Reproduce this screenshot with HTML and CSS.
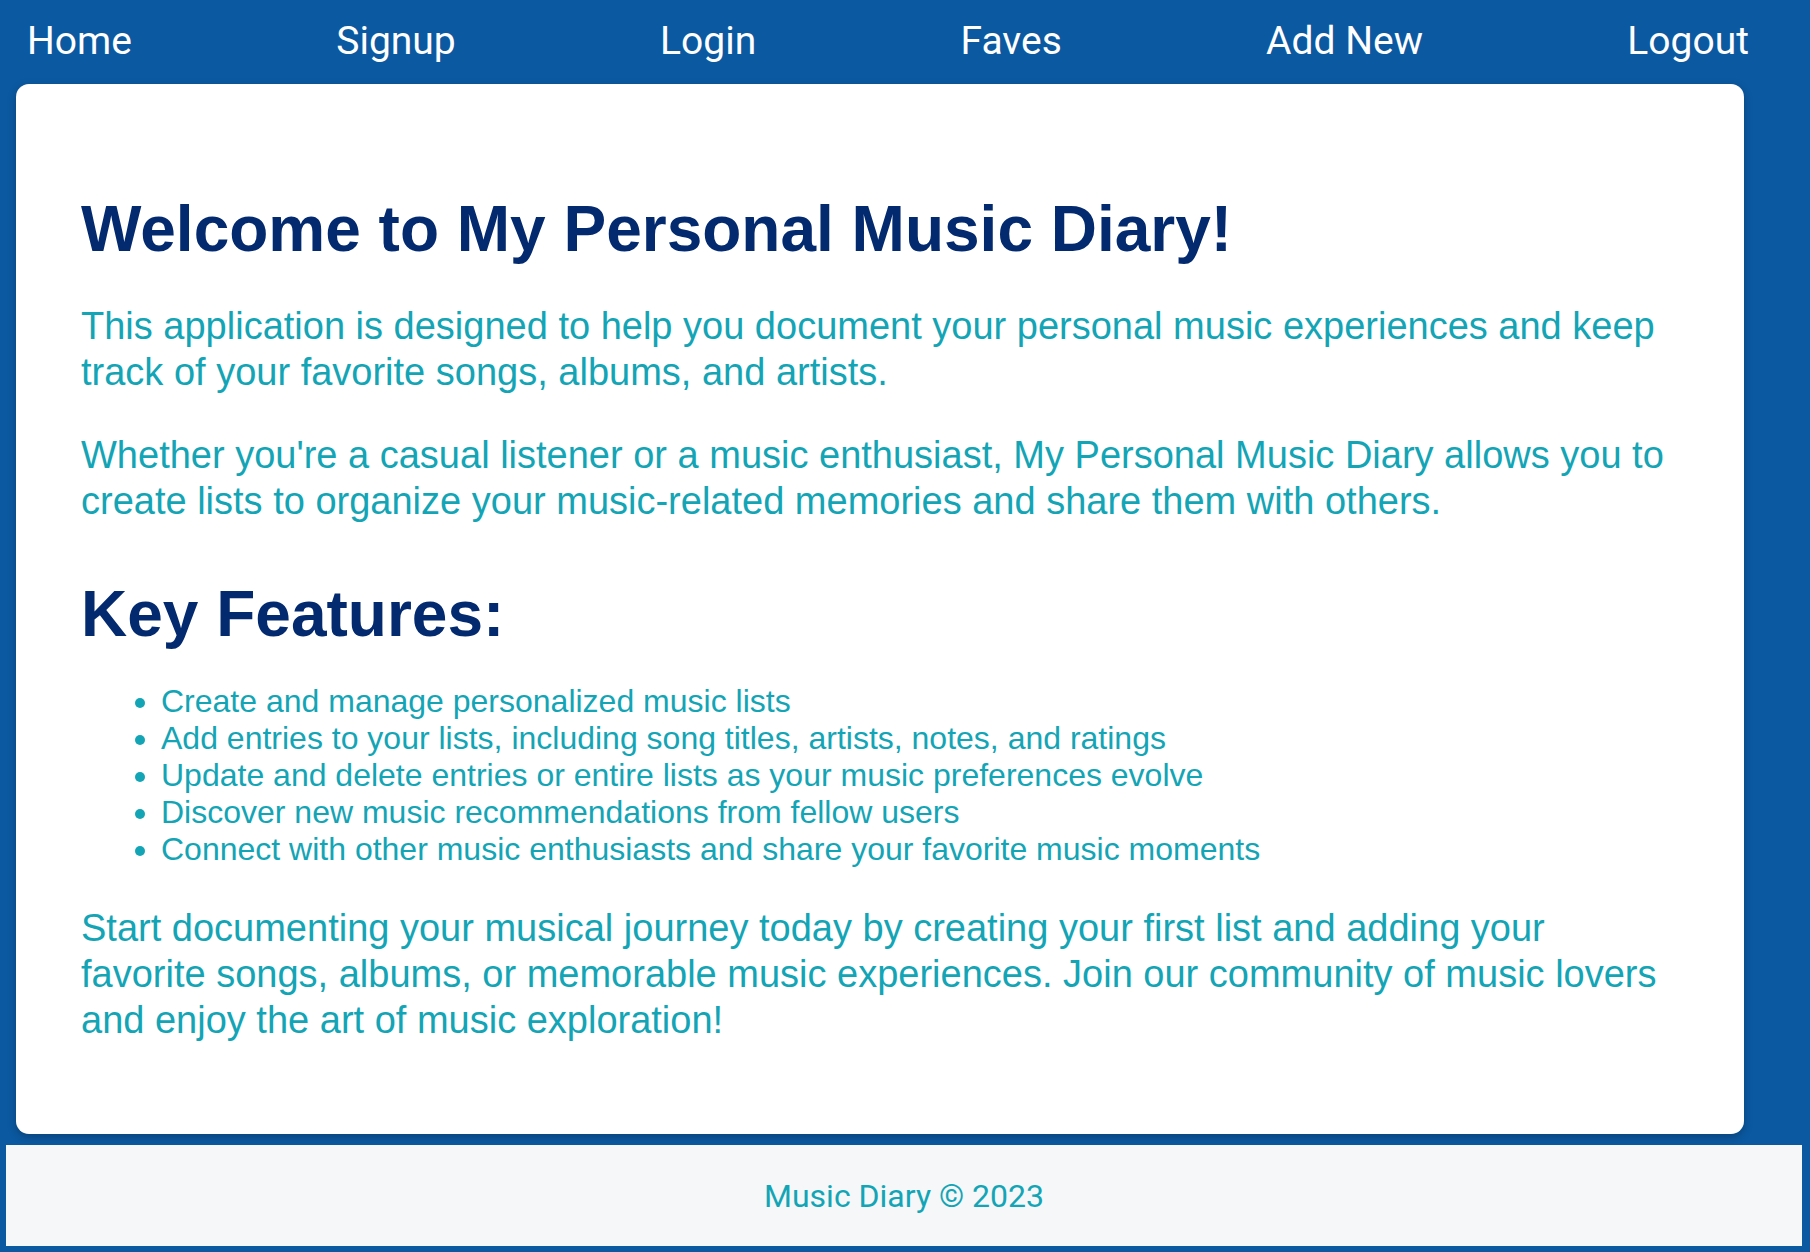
FILE: index.html
```html
<!DOCTYPE html>
<html lang="en">
<head>
<meta charset="utf-8">
<title>My Personal Music Diary</title>
<link rel="stylesheet" href="styles.css">
</head>
<body>
<nav class="nav">
  <a class="nav-link" href="#">Home</a>
  <a class="nav-link" href="#">Signup</a>
  <a class="nav-link" href="#">Login</a>
  <a class="nav-link" href="#">Faves</a>
  <a class="nav-link" href="#">Add New</a>
  <a class="nav-link" href="#">Logout</a>
</nav>
<main class="card">
  <h1 class="title">Welcome to My Personal Music Diary!</h1>
  <p class="text">This application is designed to help you document your personal music experiences and keep track of your favorite songs, albums, and artists.</p>
  <p class="text">Whether you're a casual listener or a music enthusiast, My Personal Music Diary allows you to create lists to organize your music-related memories and share them with others.</p>
  <h2 class="subtitle">Key Features:</h2>
  <ul class="features">
    <li>Create and manage personalized music lists</li>
    <li>Add entries to your lists, including song titles, artists, notes, and ratings</li>
    <li>Update and delete entries or entire lists as your music preferences evolve</li>
    <li>Discover new music recommendations from fellow users</li>
    <li>Connect with other music enthusiasts and share your favorite music moments</li>
  </ul>
  <p class="text">Start documenting your musical journey today by creating your first list and adding your favorite songs, albums, or memorable music experiences. Join our community of music lovers and enjoy the art of music exploration!</p>
</main>
<footer class="footer">Music Diary © 2023</footer>
</body>
</html>
```
FILE: styles.css
```css
html, body {
  margin: 0;
  padding: 0;
}
body {
  background: #0b59a1;
  font-family: "Liberation Sans", Arial, sans-serif;
}
.nav {
  box-sizing: border-box;
  height: 80px;
  display: flex;
  align-items: center;
  justify-content: space-between;
  padding: 2px 61px 0 27px;
}
.nav-link {
  font-family: Roboto, "Liberation Sans", sans-serif;
  font-size: 39px;
  color: #ffffff;
  text-decoration: none;
}
.card {
  display: block;
  box-sizing: border-box;
  width: 1728px;
  margin: 4px 0 0 16px;
  padding: 65px 65px 53px;
  background: #ffffff;
  border-radius: 13px;
  box-shadow: 0 3px 8px rgba(0, 0, 0, 0.25);
}
.title {
  font-size: 64px;
  font-weight: 700;
  line-height: normal;
  color: #032a6e;
  margin: 43px 0 38px;
}
.subtitle {
  font-size: 64px;
  font-weight: 700;
  line-height: normal;
  color: #032a6e;
  margin: 53px 0 32px;
}
.text {
  font-size: 38px;
  line-height: 1.2;
  color: #13a5b5;
  margin: 38px 0;
}
.features {
  font-size: 32px;
  line-height: normal;
  color: #13a5b5;
  margin: 32px 0;
  padding-left: 80px;
}
.footer {
  height: 101px;
  margin: 11px 8px 0 6px;
  background: #f5f7f9;
  display: flex;
  align-items: center;
  justify-content: center;
  font-family: Roboto, "Liberation Sans", sans-serif;
  font-size: 32px;
  color: #13a5b5;
}
```
